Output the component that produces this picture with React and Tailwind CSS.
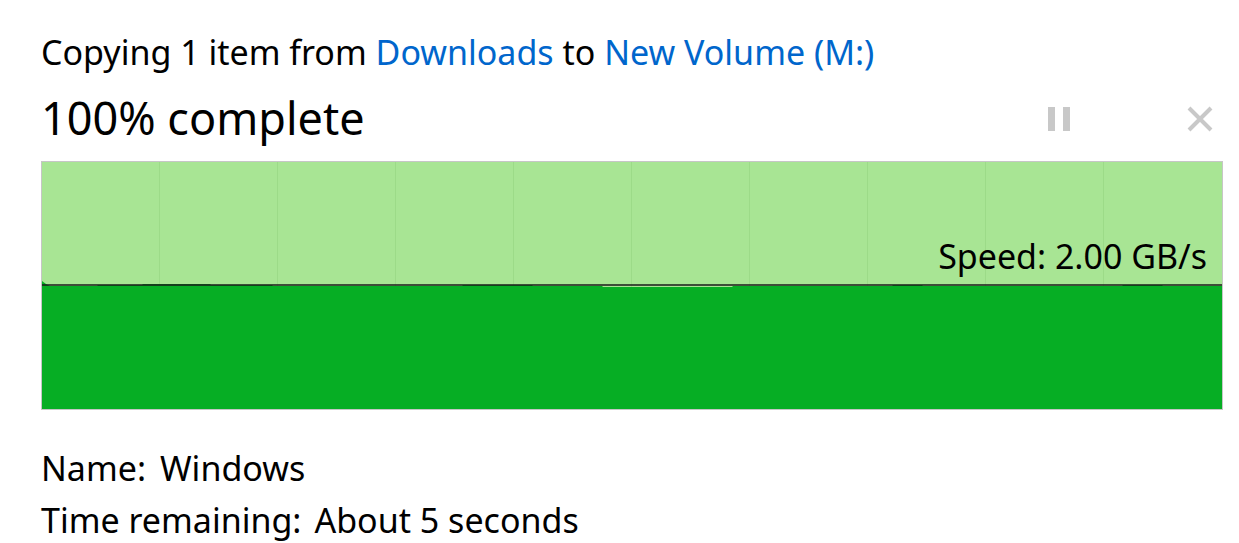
import React from 'react';

const font = { fontFamily: '"Segoe UI", "Noto Sans", "Open Sans", sans-serif' };

// top edge of the dark green throughput area (x, y) in chart coords (1180 x 247)
const speedPoints = [
  [0, 119], [4, 122], [8, 124], [55, 124], [56, 123], [100, 123], [101, 122], [168, 122],
  [169, 123], [230, 123], [231, 124], [420, 124], [421, 123], [490, 123], [491, 124],
  [560, 124], [561, 125], [690, 125], [691, 124], [850, 124], [851, 123], [880, 123],
  [881, 124], [1080, 124], [1081, 123], [1120, 123], [1121, 124], [1180, 124],
];

function SpeedChart() {
  const top = speedPoints.map(([x, y]) => `${x},${y}`).join(' ');
  return (
    <div className="relative h-[249px] border border-[#c6c6c6] bg-[#a8e594]">
      <div className="grid grid-cols-10 h-full">
        {Array.from({ length: 10 }).map((_, i) => (
          <div key={i} className={i < 9 ? 'border-r border-[#9cdb88]' : ''} />
        ))}
      </div>
      <svg className="absolute inset-0" width="100%" height="100%" viewBox="0 0 1180 247" preserveAspectRatio="none">
        <polygon points={`${top} 1180,247 0,247`} fill="#06ae24" />
        <line x1="0" y1="123" x2="1180" y2="123" stroke="#1a1a1a" strokeWidth="1.5" />
      </svg>
      <div className="absolute right-[15px] top-[73px] text-[34px] leading-[42px] text-black">
        Speed: 2.00 GB/s
      </div>
    </div>
  );
}

export default function App() {
  return (
    <div className="min-h-screen bg-white text-black pl-[41px] pr-[16px] pt-[28px]" style={font}>
      <div className="text-[34px] leading-[48px]">
        Copying 1 item from <span className="text-[#0066cc]">Downloads</span> to{' '}
        <span className="text-[#0066cc]">New Volume (M:)</span>
      </div>

      <div className="flex items-center h-[86px] -mt-[1px]">
        <div className="text-[45px] leading-[56px] flex-1">100% complete</div>
        <div className="flex items-center gap-[116px] pr-[10px] mt-[2px]">
          <svg width="24" height="24" viewBox="0 0 24 24">
            <rect x="1" y="0" width="7" height="24" fill="#c8c8c8" />
            <rect x="16" y="0" width="7" height="24" fill="#c8c8c8" />
          </svg>
          <svg width="26" height="26" viewBox="0 0 26 26">
            <path d="M2 2 L24 24 M24 2 L2 24" stroke="#c8c8c8" strokeWidth="4" />
          </svg>
        </div>
      </div>

      <SpeedChart />

      <div className="pt-[32px] text-[34px] leading-[52px]">
        <div className="flex gap-[14px]">
          <span>Name:</span>
          <span>Windows</span>
        </div>
        <div className="flex gap-[13px]">
          <span>Time remaining:</span>
          <span>About 5 seconds</span>
        </div>
      </div>
    </div>
  );
}
